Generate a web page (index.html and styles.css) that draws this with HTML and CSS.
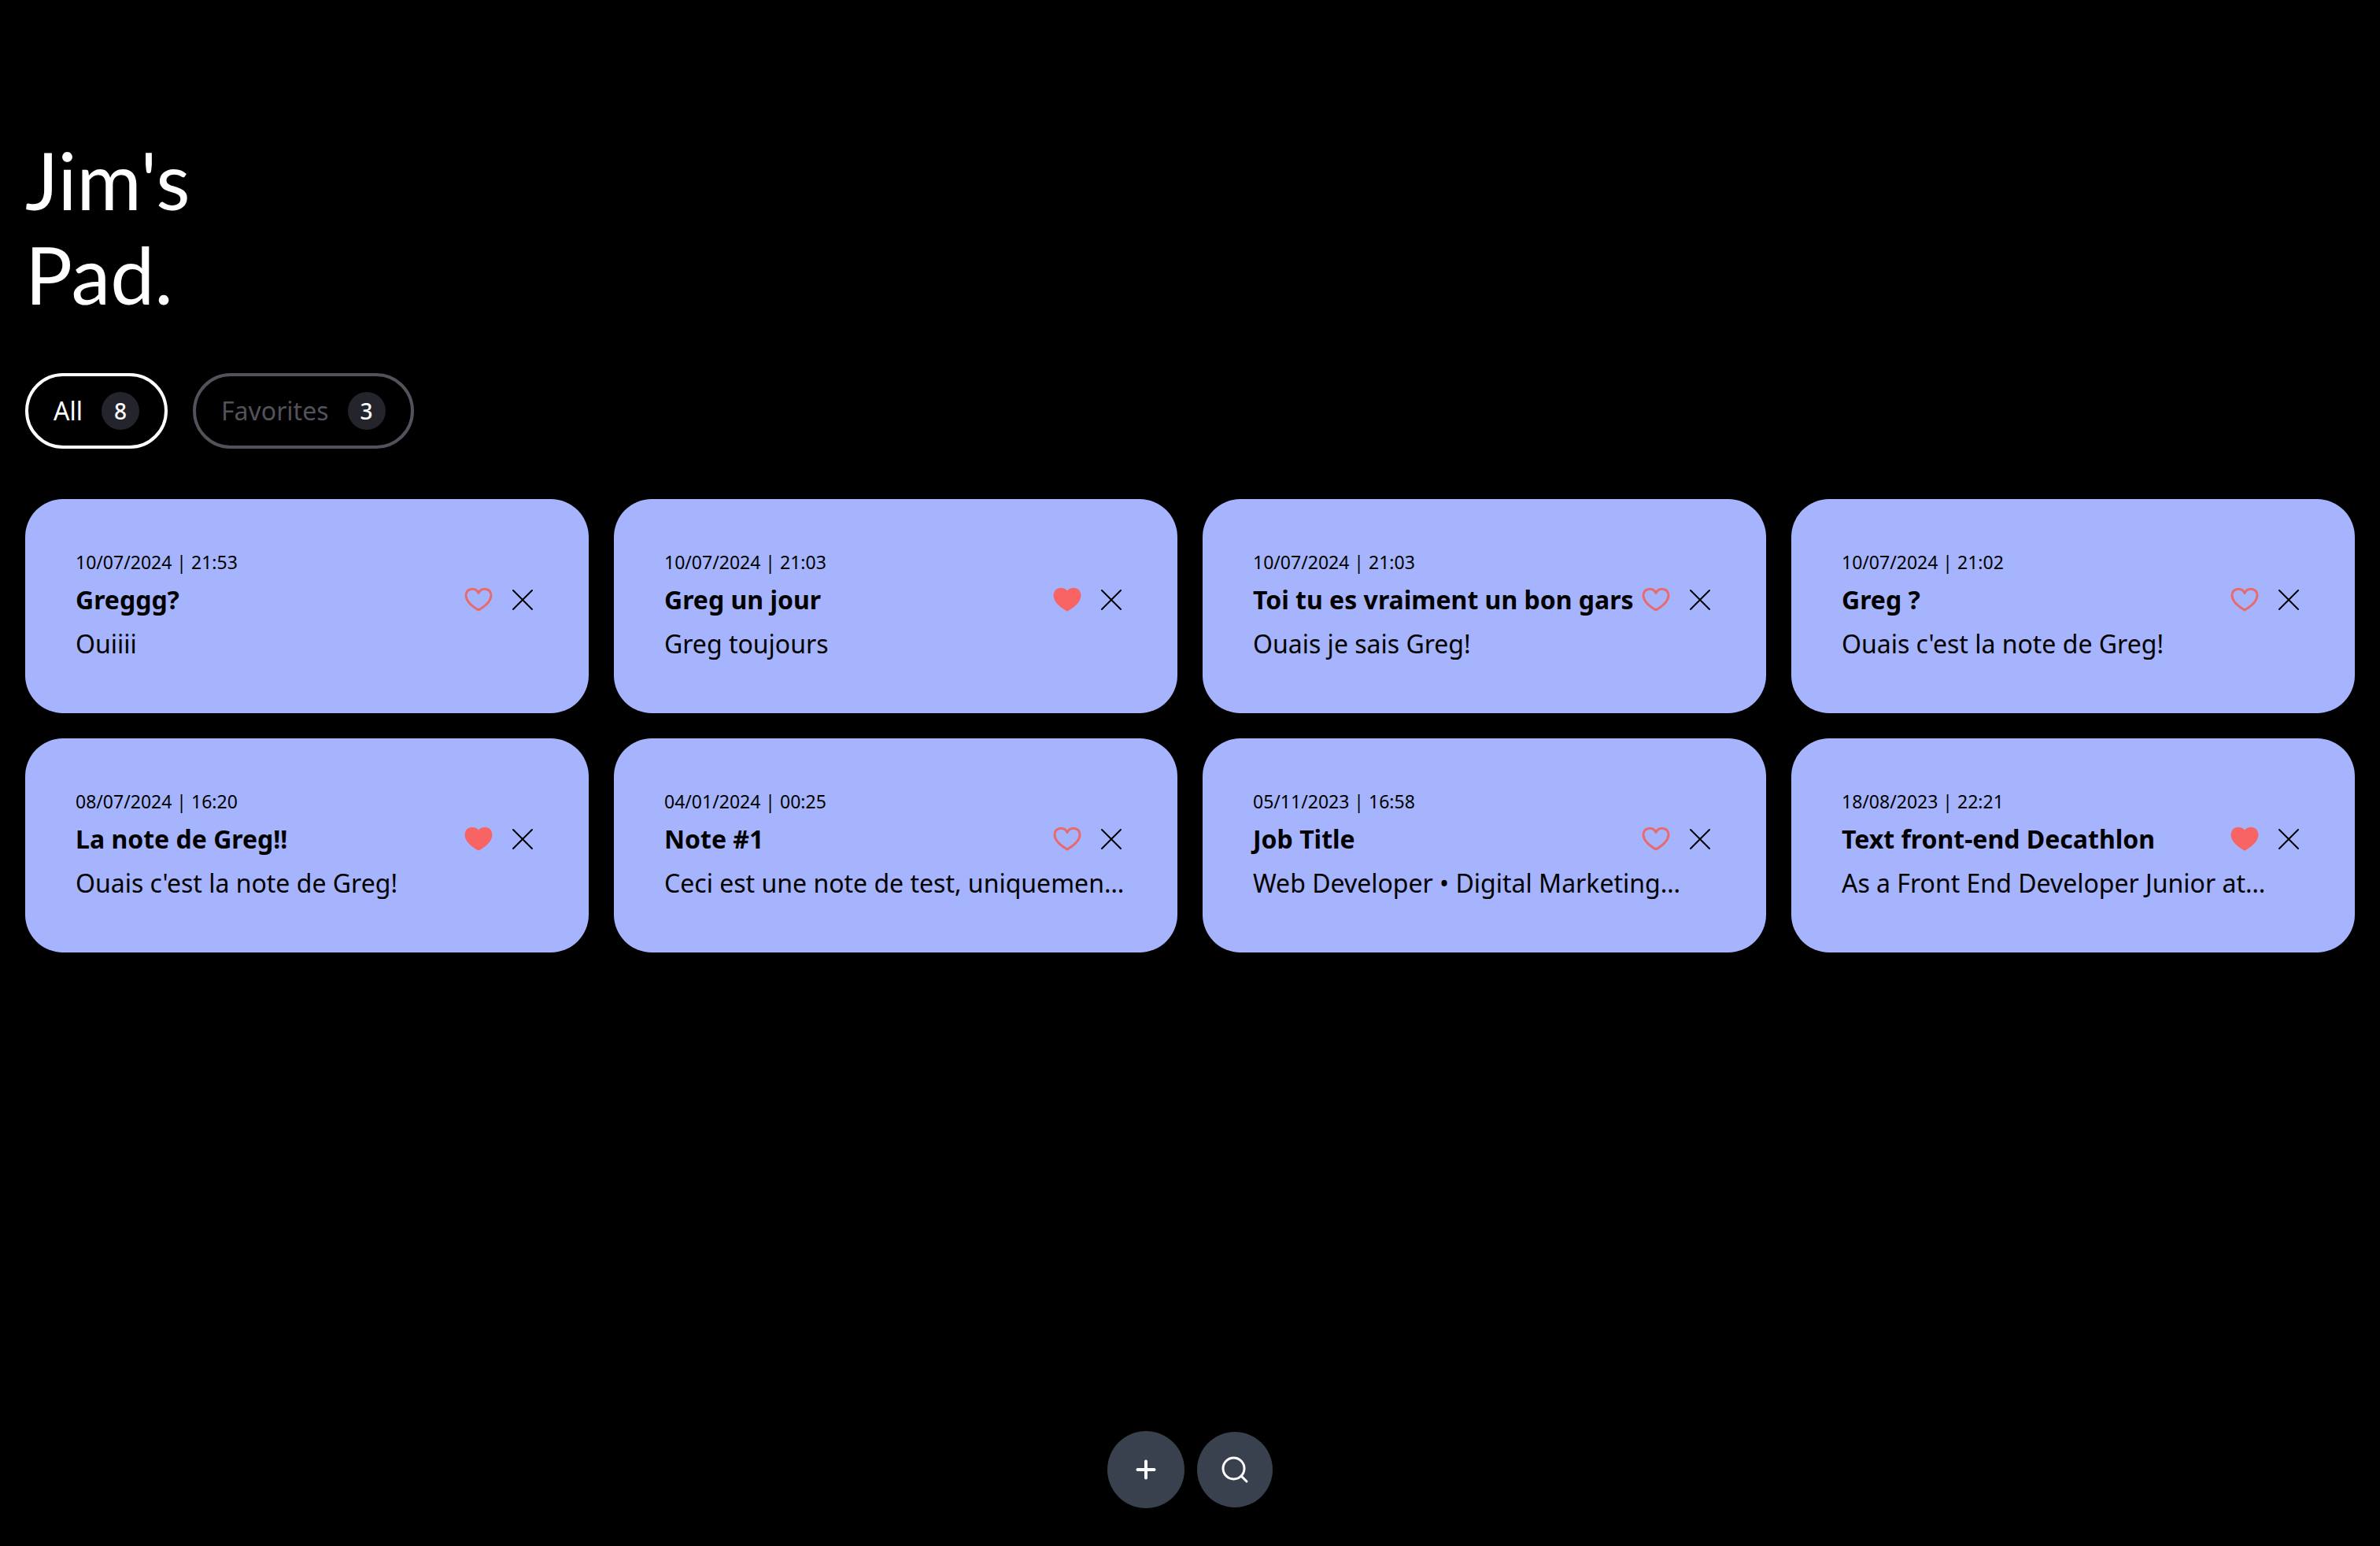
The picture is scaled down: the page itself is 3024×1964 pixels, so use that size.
FILE: index.html
```html
<!DOCTYPE html>
<html lang="en">
<head>
<meta charset="utf-8">
<meta name="viewport" content="width=device-width, initial-scale=1">
<title>Jim's Pad.</title>
<link rel="stylesheet" href="styles.css">
</head>
<body>
<svg class="sprite" aria-hidden="true">
  <symbol id="heart" viewBox="0 0 40 40"><path d="M20 11.500C18.500 8 15.500 6.200 12 6.200C7.500 6.200 4 9.500 4 14.200C4 22 10.500 27.500 20 33C29.500 27.500 36 22 36 14.200C36 9.500 32.500 6.200 28 6.200C24.500 6.200 21.500 8 20 11.500Z"/></symbol>
  <symbol id="cross" viewBox="0 0 40 40"><path d="M8 8L32 32M32 8L8 32"/></symbol>
</svg>
<div class="page">
  <header class="header">
    <h1 class="title">Jim's<br>Pad.</h1>
  </header>
  <nav class="filters" aria-label="Filter notes">
    <button class="filter filter-active" type="button">All <span class="count">8</span></button>
    <button class="filter" type="button">Favorites <span class="count">3</span></button>
  </nav>
  <main class="notes">
    <article class="note">
      <time class="note-date">10/07/2024 | 21:53</time>
      <div class="note-head">
        <h2 class="note-title">Greggg?</h2>
        <button class="icon-button heart" type="button" aria-label="Add to favorites"><svg><use href="#heart"/></svg></button>
        <button class="icon-button cross" type="button" aria-label="Delete"><svg><use href="#cross"/></svg></button>
      </div>
      <p class="note-text">Ouiiii</p>
    </article>
    <article class="note">
      <time class="note-date">10/07/2024 | 21:03</time>
      <div class="note-head">
        <h2 class="note-title">Greg un jour</h2>
        <button class="icon-button heart heart-on" type="button" aria-label="Remove from favorites"><svg><use href="#heart"/></svg></button>
        <button class="icon-button cross" type="button" aria-label="Delete"><svg><use href="#cross"/></svg></button>
      </div>
      <p class="note-text">Greg toujours</p>
    </article>
    <article class="note">
      <time class="note-date">10/07/2024 | 21:03</time>
      <div class="note-head">
        <h2 class="note-title">Toi tu es vraiment un bon gars</h2>
        <button class="icon-button heart" type="button" aria-label="Add to favorites"><svg><use href="#heart"/></svg></button>
        <button class="icon-button cross" type="button" aria-label="Delete"><svg><use href="#cross"/></svg></button>
      </div>
      <p class="note-text">Ouais je sais Greg!</p>
    </article>
    <article class="note">
      <time class="note-date">10/07/2024 | 21:02</time>
      <div class="note-head">
        <h2 class="note-title">Greg ?</h2>
        <button class="icon-button heart" type="button" aria-label="Add to favorites"><svg><use href="#heart"/></svg></button>
        <button class="icon-button cross" type="button" aria-label="Delete"><svg><use href="#cross"/></svg></button>
      </div>
      <p class="note-text">Ouais c'est la note de Greg!</p>
    </article>
    <article class="note">
      <time class="note-date">08/07/2024 | 16:20</time>
      <div class="note-head">
        <h2 class="note-title">La note de Greg!!</h2>
        <button class="icon-button heart heart-on" type="button" aria-label="Remove from favorites"><svg><use href="#heart"/></svg></button>
        <button class="icon-button cross" type="button" aria-label="Delete"><svg><use href="#cross"/></svg></button>
      </div>
      <p class="note-text">Ouais c'est la note de Greg!</p>
    </article>
    <article class="note">
      <time class="note-date">04/01/2024 | 00:25</time>
      <div class="note-head">
        <h2 class="note-title">Note #1</h2>
        <button class="icon-button heart" type="button" aria-label="Add to favorites"><svg><use href="#heart"/></svg></button>
        <button class="icon-button cross" type="button" aria-label="Delete"><svg><use href="#cross"/></svg></button>
      </div>
      <p class="note-text">Ceci est une note de test, uniquemen…</p>
    </article>
    <article class="note">
      <time class="note-date">05/11/2023 | 16:58</time>
      <div class="note-head">
        <h2 class="note-title">Job Title</h2>
        <button class="icon-button heart" type="button" aria-label="Add to favorites"><svg><use href="#heart"/></svg></button>
        <button class="icon-button cross" type="button" aria-label="Delete"><svg><use href="#cross"/></svg></button>
      </div>
      <p class="note-text">Web Developer • Digital Marketing…</p>
    </article>
    <article class="note">
      <time class="note-date">18/08/2023 | 22:21</time>
      <div class="note-head">
        <h2 class="note-title">Text front-end Decathlon</h2>
        <button class="icon-button heart heart-on" type="button" aria-label="Remove from favorites"><svg><use href="#heart"/></svg></button>
        <button class="icon-button cross" type="button" aria-label="Delete"><svg><use href="#cross"/></svg></button>
      </div>
      <p class="note-text">As a Front End Developer Junior at…</p>
    </article>
  </main>
  <footer class="actions">
    <button class="action action-add" type="button" aria-label="New note"><svg viewBox="0 0 48 48"><path d="M24 13.500V34.500M13.500 24H34.500"/></svg></button>
    <button class="action" type="button" aria-label="Search"><svg class="search-icon" viewBox="0 0 48 48"><circle cx="22.500" cy="22.500" r="13.500"/><path d="M32.500 32.500L39 39"/></svg></button>
  </footer>
</div>
</body>
</html>
```
FILE: styles.css
```css
* { box-sizing: border-box; margin: 0; padding: 0; }

body {
  background: #000;
  color: #fff;
  font-family: "Noto Sans", Lato, sans-serif;
  font-size: 32px;
  line-height: 48px;
}

button {
  border: 0;
  background: none;
  color: inherit;
  font: inherit;
  cursor: pointer;
}

svg { display: block; }
.sprite { display: none; }

.page {
  display: flex;
  flex-direction: column;
  min-height: 100vh;
  padding: 168px 32px 48px;
}

.title {
  font-family: Lato, "Noto Sans", sans-serif;
  font-size: 100px;
  font-weight: 400;
  line-height: 120px;
}

.filters {
  display: flex;
  gap: 32px;
  margin: 66px 0 64px;
}

.filter {
  display: flex;
  align-items: center;
  gap: 24px;
  height: 96px;
  padding: 0 32px;
  border: 4px solid #52525b;
  border-radius: 48px;
  color: #52525b;
}

.filter-active {
  border-color: #fff;
  color: #fff;
}

.count {
  width: 48px;
  height: 48px;
  border-radius: 50%;
  background: #24242c;
  color: #fff;
  font-size: 28px;
  font-weight: 500;
  text-align: center;
}

.notes {
  display: grid;
  grid-template-columns: repeat(4, minmax(0, 1fr));
  gap: 32px;
}

.note {
  padding: 64px;
  border-radius: 48px;
  background: #a5b4fc;
  color: #000;
}

.note-date {
  display: block;
  font-size: 23px;
  line-height: 32px;
}

.note-head {
  display: flex;
  align-items: center;
  gap: 8px;
  height: 64px;
}

.note-title {
  flex: 1;
  min-width: 0;
  font-size: 32px;
  font-weight: 700;
  line-height: 48px;
  white-space: nowrap;
}

.note-text {
  overflow: hidden;
  text-overflow: ellipsis;
  white-space: nowrap;
}

.icon-button svg {
  width: 40px;
  height: 40px;
  fill: none;
  stroke-width: 3;
}

.heart { color: #e9696d; }
.heart svg { stroke: currentColor; stroke-linejoin: round; }
.heart-on { color: #f86464; }
.heart-on svg { fill: currentColor; }
.cross { margin-left: 8px; }
.cross svg { stroke: #000; stroke-width: 2; stroke-linecap: round; }

.actions {
  display: flex;
  justify-content: center;
  align-items: center;
  gap: 16px;
  margin-top: auto;
}

.action {
  display: grid;
  place-items: center;
  width: 96px;
  height: 96px;
  border-radius: 50%;
  background: #39414f;
}

.action-add {
  width: 98px;
  height: 98px;
}

.action svg {
  width: 48px;
  height: 48px;
  fill: none;
  stroke: #fff;
  stroke-width: 4;
  stroke-linecap: round;
}

.action .search-icon { stroke-width: 3; }
```
